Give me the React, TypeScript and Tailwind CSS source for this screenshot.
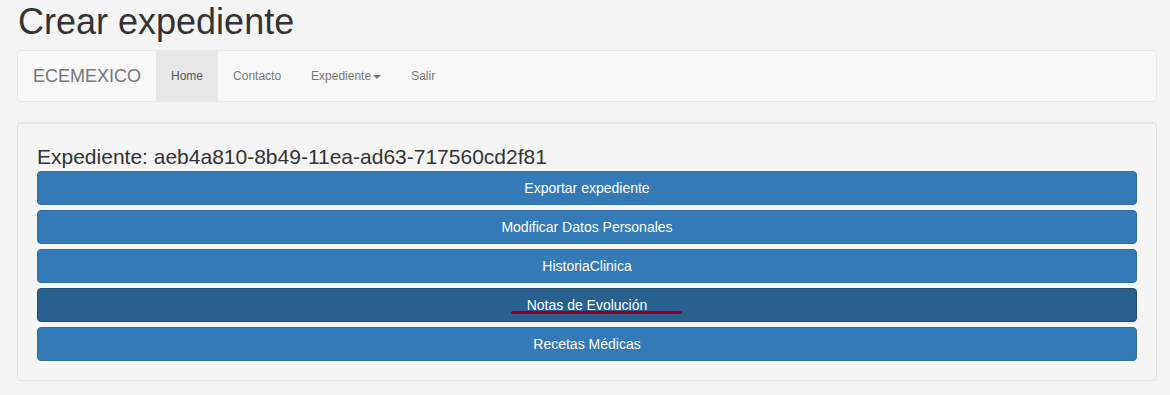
const actions = [
  "Exportar expediente",
  "Modificar Datos Personales",
  "HistoriaClinica",
  "Notas de Evolución",
  "Recetas Médicas",
];

export default function App() {
  return (
    <div
      className="min-h-screen bg-[#f4f4f4] text-[#333] pl-[17px] pr-[13px] pt-[2px]"
      style={{ fontFamily: '"Liberation Sans", Arial, sans-serif' }}
    >
      <h1 className="text-[36px] leading-[40px] font-normal pl-[1px] mb-[8px]">
        Crear expediente
      </h1>

      <nav className="flex items-stretch h-[52px] bg-[#f8f8f8] border border-[#e7e7e7] rounded-[4px] mb-[20px]">
        <div className="px-[15px] flex items-center text-[18px] text-[#777]">
          ECEMEXICO
        </div>
        <ul className="flex text-[12px] text-[#777]">
          <li className="flex items-center px-[15px] bg-[#e7e7e7] text-[#555]">Home</li>
          <li className="flex items-center px-[15px]">Contacto</li>
          <li className="flex items-center px-[15px]">
            Expediente
            <span className="ml-[2px] mt-[1px] w-0 h-0 border-x-[4px] border-x-transparent border-t-[4px] border-t-[#777]" />
          </li>
          <li className="flex items-center px-[15px]">Salir</li>
        </ul>
      </nav>

      <div className="bg-[#f5f5f5] border border-[#e3e3e3] rounded-[4px] p-[19px] shadow-[inset_0_1px_1px_rgba(0,0,0,0.05)]">
        <h3 className="text-[21px] leading-[29px] font-normal">
          Expediente: aeb4a810-8b49-11ea-ad63-717560cd2f81
        </h3>
        <div className="flex flex-col gap-[5px]">
          {actions.map((label, i) => {
            const active = i === 3;
            return (
              <button
                key={label}
                className={
                  active
                    ? "relative h-[34px] w-full rounded-[4px] border border-[#204d74] bg-[#286090] text-white text-[14px]"
                    : "relative h-[34px] w-full rounded-[4px] border border-[#2e6da4] bg-[#337ab7] text-white text-[14px]"
                }
              >
                {label}
                {active && (
                  <span className="absolute left-[473px] top-[22px] w-[171px] h-[3px] rounded-full bg-[#8a0022]" />
                )}
              </button>
            );
          })}
        </div>
      </div>
    </div>
  );
}
